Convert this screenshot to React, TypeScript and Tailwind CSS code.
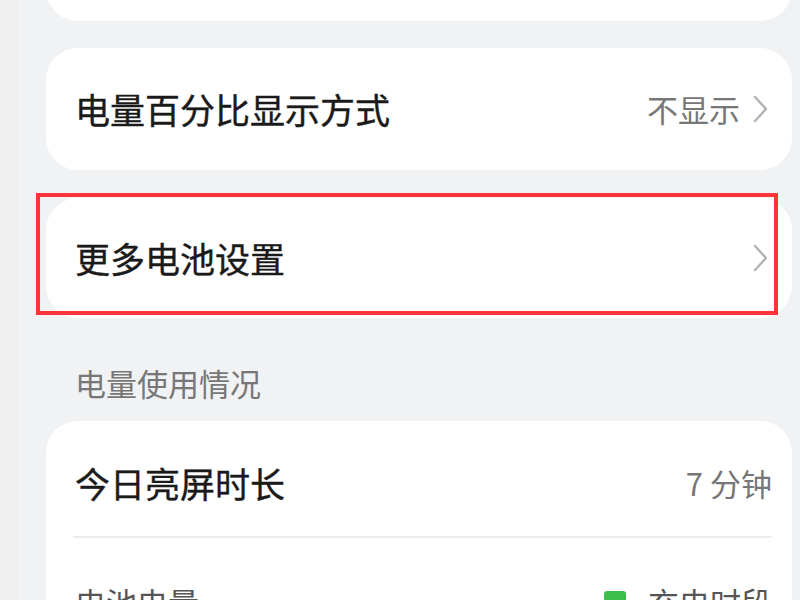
import React from 'react';

const font = { fontFamily: '"Noto Sans CJK SC", "Noto Sans", sans-serif' };

// thin chevron used at the right edge of rows
const Chevron: React.FC = () => (
  <svg width="16" height="30" viewBox="0 0 16 30" fill="none" className="shrink-0">
    <polyline points="3,3 14,15 3,27" stroke="#b3b3b3" strokeWidth="2.4" strokeLinecap="round" strokeLinejoin="round" />
  </svg>
);

export default function App() {
  return (
    <div className="flex h-[600px] w-[800px] overflow-hidden bg-[#f1f2f4]" style={font}>
      {/* left strip */}
      <div className="w-[18px] shrink-0 bg-[#efefef]" />
      <div className="flex w-[746px] shrink-0 flex-col pl-[28px] box-content">
        {/* card cut at top */}
        <div className="mt-[-60px] h-[81px] shrink-0 rounded-[32px] bg-white" />

        <div className="mt-[27px] flex h-[122px] shrink-0 items-center justify-between rounded-[32px] bg-white pl-[29px] pr-[24px]">
          <span className="text-[35px] text-[#1a1a1a] [-webkit-text-stroke:0.4px_#1a1a1a]">电量百分比显示方式</span>
          <div className="flex items-center gap-[12px]">
            <span className="text-[31px] text-[#777777]">不显示</span>
            <Chevron />
          </div>
        </div>

        <div className="relative mt-[28px] flex h-[120px] shrink-0 items-center justify-between rounded-[32px] bg-white pl-[29px] pr-[24px]">
          <span className="text-[35px] text-[#1a1a1a] [-webkit-text-stroke:0.4px_#1a1a1a]">更多电池设置</span>
          <Chevron />
          {/* highlight frame */}
          <div className="absolute left-[-10px] top-[-5px] h-[122px] w-[742px] border-[4px] border-[#ff3338]" />
        </div>

        <div className="mt-[47px] shrink-0 pl-[29px] text-[31px] leading-[36px] text-[#777777]">电量使用情况</div>

        <div className="mt-[20px] flex shrink-0 flex-col rounded-t-[32px] bg-white pl-[27px] pr-[20px]">
          <div className="flex h-[115px] items-center justify-between pl-[2px] pt-[10px]">
            <span className="text-[35px] text-[#1a1a1a] [-webkit-text-stroke:0.4px_#1a1a1a]">今日亮屏时长</span>
            <span className="text-[31px] text-[#777777]">7 分钟</span>
          </div>
          <div className="h-[2px] bg-[#ececec]" />
          <div className="flex h-[100px] items-start justify-between pl-[2px] pt-[44px]">
            <span className="text-[31px] leading-[40px] text-[#555555]">电池电量</span>
            <div className="flex items-center gap-[22px]">
              <span className="h-[22px] w-[22px] rounded-[3px] bg-[#3cbf4a]" />
              <span className="text-[31px] leading-[40px] text-[#555555]">充电时段</span>
            </div>
          </div>
        </div>
      </div>
    </div>
  );
}
